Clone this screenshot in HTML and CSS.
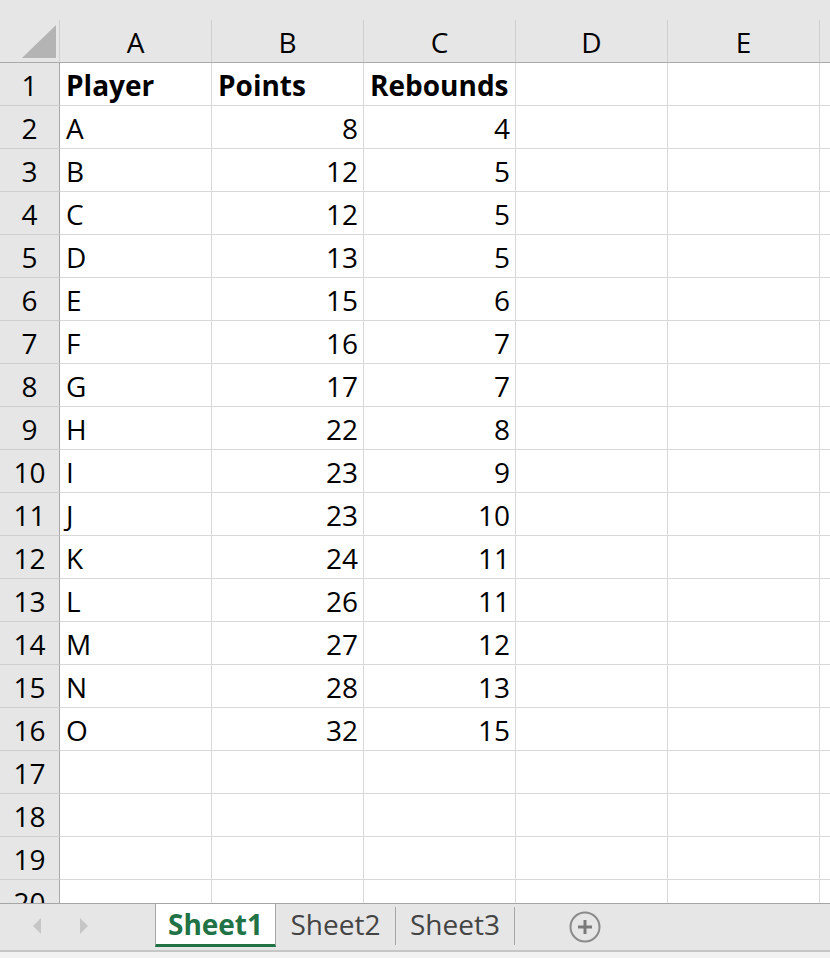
FILE: index.html
```html
<!DOCTYPE html>
<html lang="en">
<head>
<meta charset="utf-8">
<title>Book1</title>
<link rel="stylesheet" href="styles.css">
</head>
<body>
<div class="sheet">
  <div class="corner"><div class="hd-inner"><svg class="select-all" width="59" height="42" viewBox="0 20 59 42"><polygon points="22,58 56,25 56,58" fill="#b4b4b4"/></svg></div></div>
  <div class="colhead"><div class="hd-inner">A</div></div>
  <div class="colhead"><div class="hd-inner">B</div></div>
  <div class="colhead"><div class="hd-inner">C</div></div>
  <div class="colhead"><div class="hd-inner">D</div></div>
  <div class="colhead"><div class="hd-inner">E</div></div>
  <div class="colhead last"><div class="hd-inner"></div></div>

  <div class="rowhead">1</div><div class="cell bold">Player</div><div class="cell bold">Points</div><div class="cell bold">Rebounds</div><div class="cell"></div><div class="cell"></div><div class="cell"></div>
  <div class="rowhead">2</div><div class="cell">A</div><div class="cell num">8</div><div class="cell num">4</div><div class="cell"></div><div class="cell"></div><div class="cell"></div>
  <div class="rowhead">3</div><div class="cell">B</div><div class="cell num">12</div><div class="cell num">5</div><div class="cell"></div><div class="cell"></div><div class="cell"></div>
  <div class="rowhead">4</div><div class="cell">C</div><div class="cell num">12</div><div class="cell num">5</div><div class="cell"></div><div class="cell"></div><div class="cell"></div>
  <div class="rowhead">5</div><div class="cell">D</div><div class="cell num">13</div><div class="cell num">5</div><div class="cell"></div><div class="cell"></div><div class="cell"></div>
  <div class="rowhead">6</div><div class="cell">E</div><div class="cell num">15</div><div class="cell num">6</div><div class="cell"></div><div class="cell"></div><div class="cell"></div>
  <div class="rowhead">7</div><div class="cell">F</div><div class="cell num">16</div><div class="cell num">7</div><div class="cell"></div><div class="cell"></div><div class="cell"></div>
  <div class="rowhead">8</div><div class="cell">G</div><div class="cell num">17</div><div class="cell num">7</div><div class="cell"></div><div class="cell"></div><div class="cell"></div>
  <div class="rowhead">9</div><div class="cell">H</div><div class="cell num">22</div><div class="cell num">8</div><div class="cell"></div><div class="cell"></div><div class="cell"></div>
  <div class="rowhead">10</div><div class="cell">I</div><div class="cell num">23</div><div class="cell num">9</div><div class="cell"></div><div class="cell"></div><div class="cell"></div>
  <div class="rowhead">11</div><div class="cell">J</div><div class="cell num">23</div><div class="cell num">10</div><div class="cell"></div><div class="cell"></div><div class="cell"></div>
  <div class="rowhead">12</div><div class="cell">K</div><div class="cell num">24</div><div class="cell num">11</div><div class="cell"></div><div class="cell"></div><div class="cell"></div>
  <div class="rowhead">13</div><div class="cell">L</div><div class="cell num">26</div><div class="cell num">11</div><div class="cell"></div><div class="cell"></div><div class="cell"></div>
  <div class="rowhead">14</div><div class="cell">M</div><div class="cell num">27</div><div class="cell num">12</div><div class="cell"></div><div class="cell"></div><div class="cell"></div>
  <div class="rowhead">15</div><div class="cell">N</div><div class="cell num">28</div><div class="cell num">13</div><div class="cell"></div><div class="cell"></div><div class="cell"></div>
  <div class="rowhead">16</div><div class="cell">O</div><div class="cell num">32</div><div class="cell num">15</div><div class="cell"></div><div class="cell"></div><div class="cell"></div>
  <div class="rowhead">17</div><div class="cell"></div><div class="cell"></div><div class="cell"></div><div class="cell"></div><div class="cell"></div><div class="cell"></div>
  <div class="rowhead">18</div><div class="cell"></div><div class="cell"></div><div class="cell"></div><div class="cell"></div><div class="cell"></div><div class="cell"></div>
  <div class="rowhead">19</div><div class="cell"></div><div class="cell"></div><div class="cell"></div><div class="cell"></div><div class="cell"></div><div class="cell"></div>
  <div class="rowhead">20</div><div class="cell"></div><div class="cell"></div><div class="cell"></div><div class="cell"></div><div class="cell"></div><div class="cell"></div>
</div>

<div class="tabbar">
  <div class="nav">
    <svg class="arrow" width="8" height="16" viewBox="0 0 8 16"><polygon points="8,0 0,8 8,16" fill="#c6c6c6"/></svg>
    <svg class="arrow" width="8" height="16" viewBox="0 0 8 16"><polygon points="0,0 8,8 0,16" fill="#c6c6c6"/></svg>
  </div>
  <div class="tab active">Sheet1</div>
  <div class="tab second">Sheet2</div>
  <div class="sep"></div>
  <div class="tab third">Sheet3</div>
  <div class="sep"></div>
  <svg class="add" width="32" height="32" viewBox="0 0 32 32">
    <circle cx="16" cy="16" r="14.5" fill="none" stroke="#8a8a8a" stroke-width="2"/>
    <path d="M16 9 V23 M9 16 H23" stroke="#7a7a7a" stroke-width="3"/>
  </svg>
</div>
<div class="statusline"></div>
</body>
</html>
```

FILE: styles.css
```css
html, body {
  margin: 0;
  padding: 0;
}

body {
  width: 830px;
  height: 958px;
  overflow: hidden;
  background: #f2f2f2;
  font-family: "Open Sans", "Noto Sans", sans-serif;
  color: #000;
}

/* worksheet grid */
.sheet {
  display: grid;
  grid-template-columns: 60px repeat(5, 152px) 1fr;
  grid-template-rows: 63px;
  grid-auto-rows: 43px;
  height: 903px;
  overflow: hidden;
  background: #fff;
  font-size: 28px;
}

.corner,
.colhead {
  background: #e6e6e6;
  border-bottom: 1px solid #a9a9a9;
  padding-top: 20px;
  box-sizing: border-box;
}

.hd-inner {
  height: 42px;
  display: flex;
  align-items: center;
  justify-content: center;
  padding-top: 1px;
  border-right: 1px solid #cfcfcf;
  box-sizing: border-box;
}

.select-all {
  display: block;
  margin-top: -1px;
}

.rowhead {
  background: #e6e6e6;
  border-right: 1px solid #a9a9a9;
  border-bottom: 1px solid #cfcfcf;
  box-sizing: border-box;
  display: flex;
  align-items: center;
  justify-content: center;
  padding-top: 1px;
}

.cell {
  border-right: 1px solid #d9d9d9;
  border-bottom: 1px solid #d9d9d9;
  box-sizing: border-box;
  display: flex;
  align-items: center;
  padding: 1px 5px 0 6px;
  white-space: nowrap;
}

.cell.bold {
  font-weight: 700;
}

.cell.num {
  justify-content: flex-end;
}

/* sheet tabs */
.tabbar {
  display: flex;
  align-items: flex-start;
  height: 47px;
  box-sizing: border-box;
  border-top: 1px solid #a6a6a6;
  background: #e6e6e6;
}

.nav {
  width: 155px;
  height: 46px;
  display: flex;
  align-items: center;
  padding-left: 33px;
  gap: 39px;
  box-sizing: border-box;
}

.arrow {
  display: block;
  margin-top: -3px;
}

.tab {
  width: 120px;
  height: 43px;
  box-sizing: border-box;
  display: flex;
  align-items: center;
  justify-content: center;
  padding-bottom: 3px;
  font-size: 28px;
  color: #444;
}

.tab.second {
  width: 119px;
}

.tab.third {
  width: 118px;
}

.tab.active {
  width: 121px;
  background: #fff;
  border-left: 1px solid #a6a6a6;
  border-right: 1px solid #a6a6a6;
  border-bottom: 3px solid #217346;
  padding-bottom: 0;
  color: #217346;
  font-weight: 700;
}

.sep {
  width: 1px;
  height: 38px;
  margin-top: 3px;
  background: #a6a6a6;
}

.add {
  display: block;
  margin: 7px 0 0 54px;
}

.statusline {
  height: 2px;
  background: #c6c6c6;
}
```
